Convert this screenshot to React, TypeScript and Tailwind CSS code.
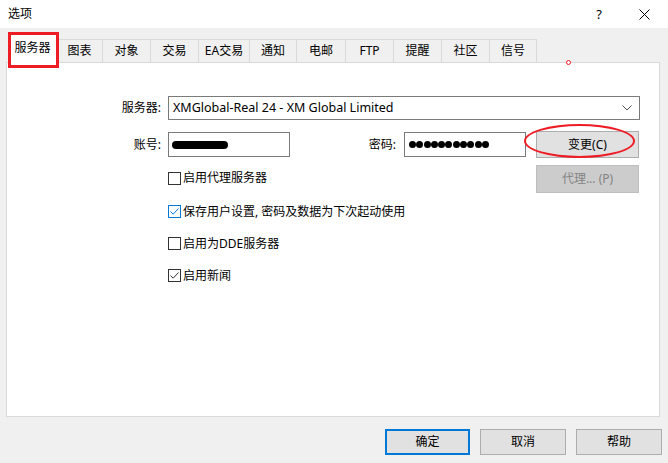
import React from 'react';

const tabs = [
  { label: '服务器', w: 'w-[49px]' },
  { label: '图表', w: 'w-[46px]' },
  { label: '对象', w: 'w-[48px]' },
  { label: '交易', w: 'w-[48px]' },
  { label: 'EA交易', w: 'w-[51px]' },
  { label: '通知', w: 'w-[47px]' },
  { label: '电邮', w: 'w-[49px]' },
  { label: 'FTP', w: 'w-[48px]' },
  { label: '提醒', w: 'w-[48px]' },
  { label: '社区', w: 'w-[48px]' },
  { label: '信号', w: 'w-[47px]' },
];

const Checkbox: React.FC<{ checked?: boolean; focused?: boolean; label: string }> = ({ checked, focused, label }) => (
  <div className="flex items-center gap-[2px]">
    <div
      className={`w-[13px] h-[13px] border bg-white flex items-center justify-center ${
        focused ? 'border-[#0078d7]' : 'border-[#333333]'
      }`}
    >
      {checked && (
        <svg width="11" height="11" viewBox="0 0 11 11">
          <path d="M1.5 5.5 L4.2 8.2 L9.5 2.5" fill="none" stroke={focused ? '#0078d7' : '#333333'} strokeWidth="1" />
        </svg>
      )}
    </div>
    <span className="text-[12px] leading-none text-black">{label}</span>
  </div>
);

const Button: React.FC<{ label: string; w: string; h?: string; primary?: boolean; disabled?: boolean }> = ({
  label,
  w,
  h = 'h-[26px]',
  primary,
  disabled,
}) => (
  <div
    className={`${w} ${h} flex items-center justify-center text-[12px] ${
      disabled
        ? 'bg-[#cccccc] border border-[#bfbfbf] text-[#838383]'
        : primary
        ? 'bg-[#e1e1e1] border-2 border-[#0078d7] text-black'
        : 'bg-[#e1e1e1] border border-[#adadad] text-black'
    }`}
  >
    {label}
  </div>
);

export default function App() {
  return (
    <div
      className="relative w-[668px] h-[463px] bg-[#f0f0f0] flex flex-col overflow-hidden text-black"
      style={{ fontFamily: '"Noto Sans", "Noto Sans CJK SC", sans-serif' }}
    >
      {/* title bar */}
      <div className="h-[28px] bg-white flex items-center pl-[8px] pr-[18px]">
        <span className="text-[12px]">选项</span>
        <div className="ml-auto flex items-center gap-[37px]">
          <span className="text-[13px] leading-none">?</span>
          <svg width="11" height="11" viewBox="0 0 11 11">
            <path d="M0.5 0.5 L10.5 10.5 M10.5 0.5 L0.5 10.5" stroke="#000" strokeWidth="1" />
          </svg>
        </div>
      </div>

      {/* tabs */}
      <div className="mt-[6px] pl-[8px] h-[28px] flex items-end relative z-10">
        {tabs.map((t, i) =>
          i === 0 ? (
            <div
              key={t.label}
              className={`${t.w} h-[29px] -mb-px bg-white border border-b-0 border-[#d9d9d9] flex items-center justify-center text-[12px] pb-[2px]`}
            >
              {t.label}
            </div>
          ) : (
            <div
              key={t.label}
              className={`${t.w} h-[23px] bg-[#f0f0f0] border border-l-0 border-b-0 border-[#d9d9d9] flex items-center justify-center text-[12px]`}
            >
              {t.label}
            </div>
          )
        )}
      </div>

      {/* panel */}
      <div className="mx-[6px] mr-[8px] h-[355px] bg-white border border-[#d9d9d9] pt-[33px]">
        <div className="flex items-center">
          <div className="w-[154px] text-right text-[12px]">服务器:</div>
          <div className="ml-[7px] w-[472px] h-[24px] border border-[#7a7a7a] flex items-center pl-[4px] pr-[7px]">
            <span className="text-[12.5px]">XMGlobal-Real 24 - XM Global Limited</span>
            <svg className="ml-auto" width="10" height="6" viewBox="0 0 10 6">
              <path d="M0.5 0.5 L5 5 L9.5 0.5" fill="none" stroke="#555" strokeWidth="1" />
            </svg>
          </div>
        </div>

        <div className="mt-[11px] flex items-center">
          <div className="w-[154px] text-right text-[12px]">账号:</div>
          <div className="ml-[7px] w-[122px] h-[25px] border border-[#7a7a7a] flex items-center pl-[3px]">
            <div className="w-[56px] h-[8px] bg-black rounded-full" />
          </div>
          <div className="w-[106px] text-right text-[12px]">密码:</div>
          <div className="ml-[8px] w-[122px] h-[25px] border border-[#7a7a7a] flex items-center pl-[4px] gap-[0.3px]">
            {Array.from({ length: 11 }).map((_, i) => (
              <div key={i} className="w-[7px] h-[7px] rounded-full bg-black" />
            ))}
          </div>
          <div className="ml-[10px]">
            <Button label="变更(C)" w="w-[103px]" h="h-[27px]" />
          </div>
        </div>

        <div className="mt-[7px] flex items-center">
          <div className="ml-[161px] w-[368px] -mt-[2px]">
            <Checkbox label="启用代理服务器" />
          </div>
          <Button label="代理... (P)" w="w-[103px]" h="h-[28px]" disabled />
        </div>

        <div className="ml-[161px] mt-[12px] flex flex-col gap-[19px]">
          <Checkbox checked focused label="保存用户设置, 密码及数据为下次起动使用" />
          <Checkbox label="启用为DDE服务器" />
          <Checkbox checked label="启用新闻" />
        </div>
      </div>

      {/* bottom buttons */}
      <div className="mt-[12px] flex justify-end pr-[6px] gap-[10px]">
        <Button label="确定" w="w-[85px]" primary />
        <Button label="取消" w="w-[86px]" />
        <Button label="帮助" w="w-[86px]" />
      </div>

      {/* annotations */}
      <div className="absolute left-[8px] top-[32px] w-[51px] h-[36px] border-[3px] border-[#ee1c25] z-20 pointer-events-none" />
      <div className="absolute left-[524px] top-[124px] w-[111px] h-[34px] border-2 border-[#ee1c25] rounded-[50%] z-20 pointer-events-none" />
      <div className="absolute left-[566px] top-[60px] w-[5px] h-[5px] border border-[#ee1c25] bg-white rounded-full z-20 pointer-events-none" />
    </div>
  );
}
